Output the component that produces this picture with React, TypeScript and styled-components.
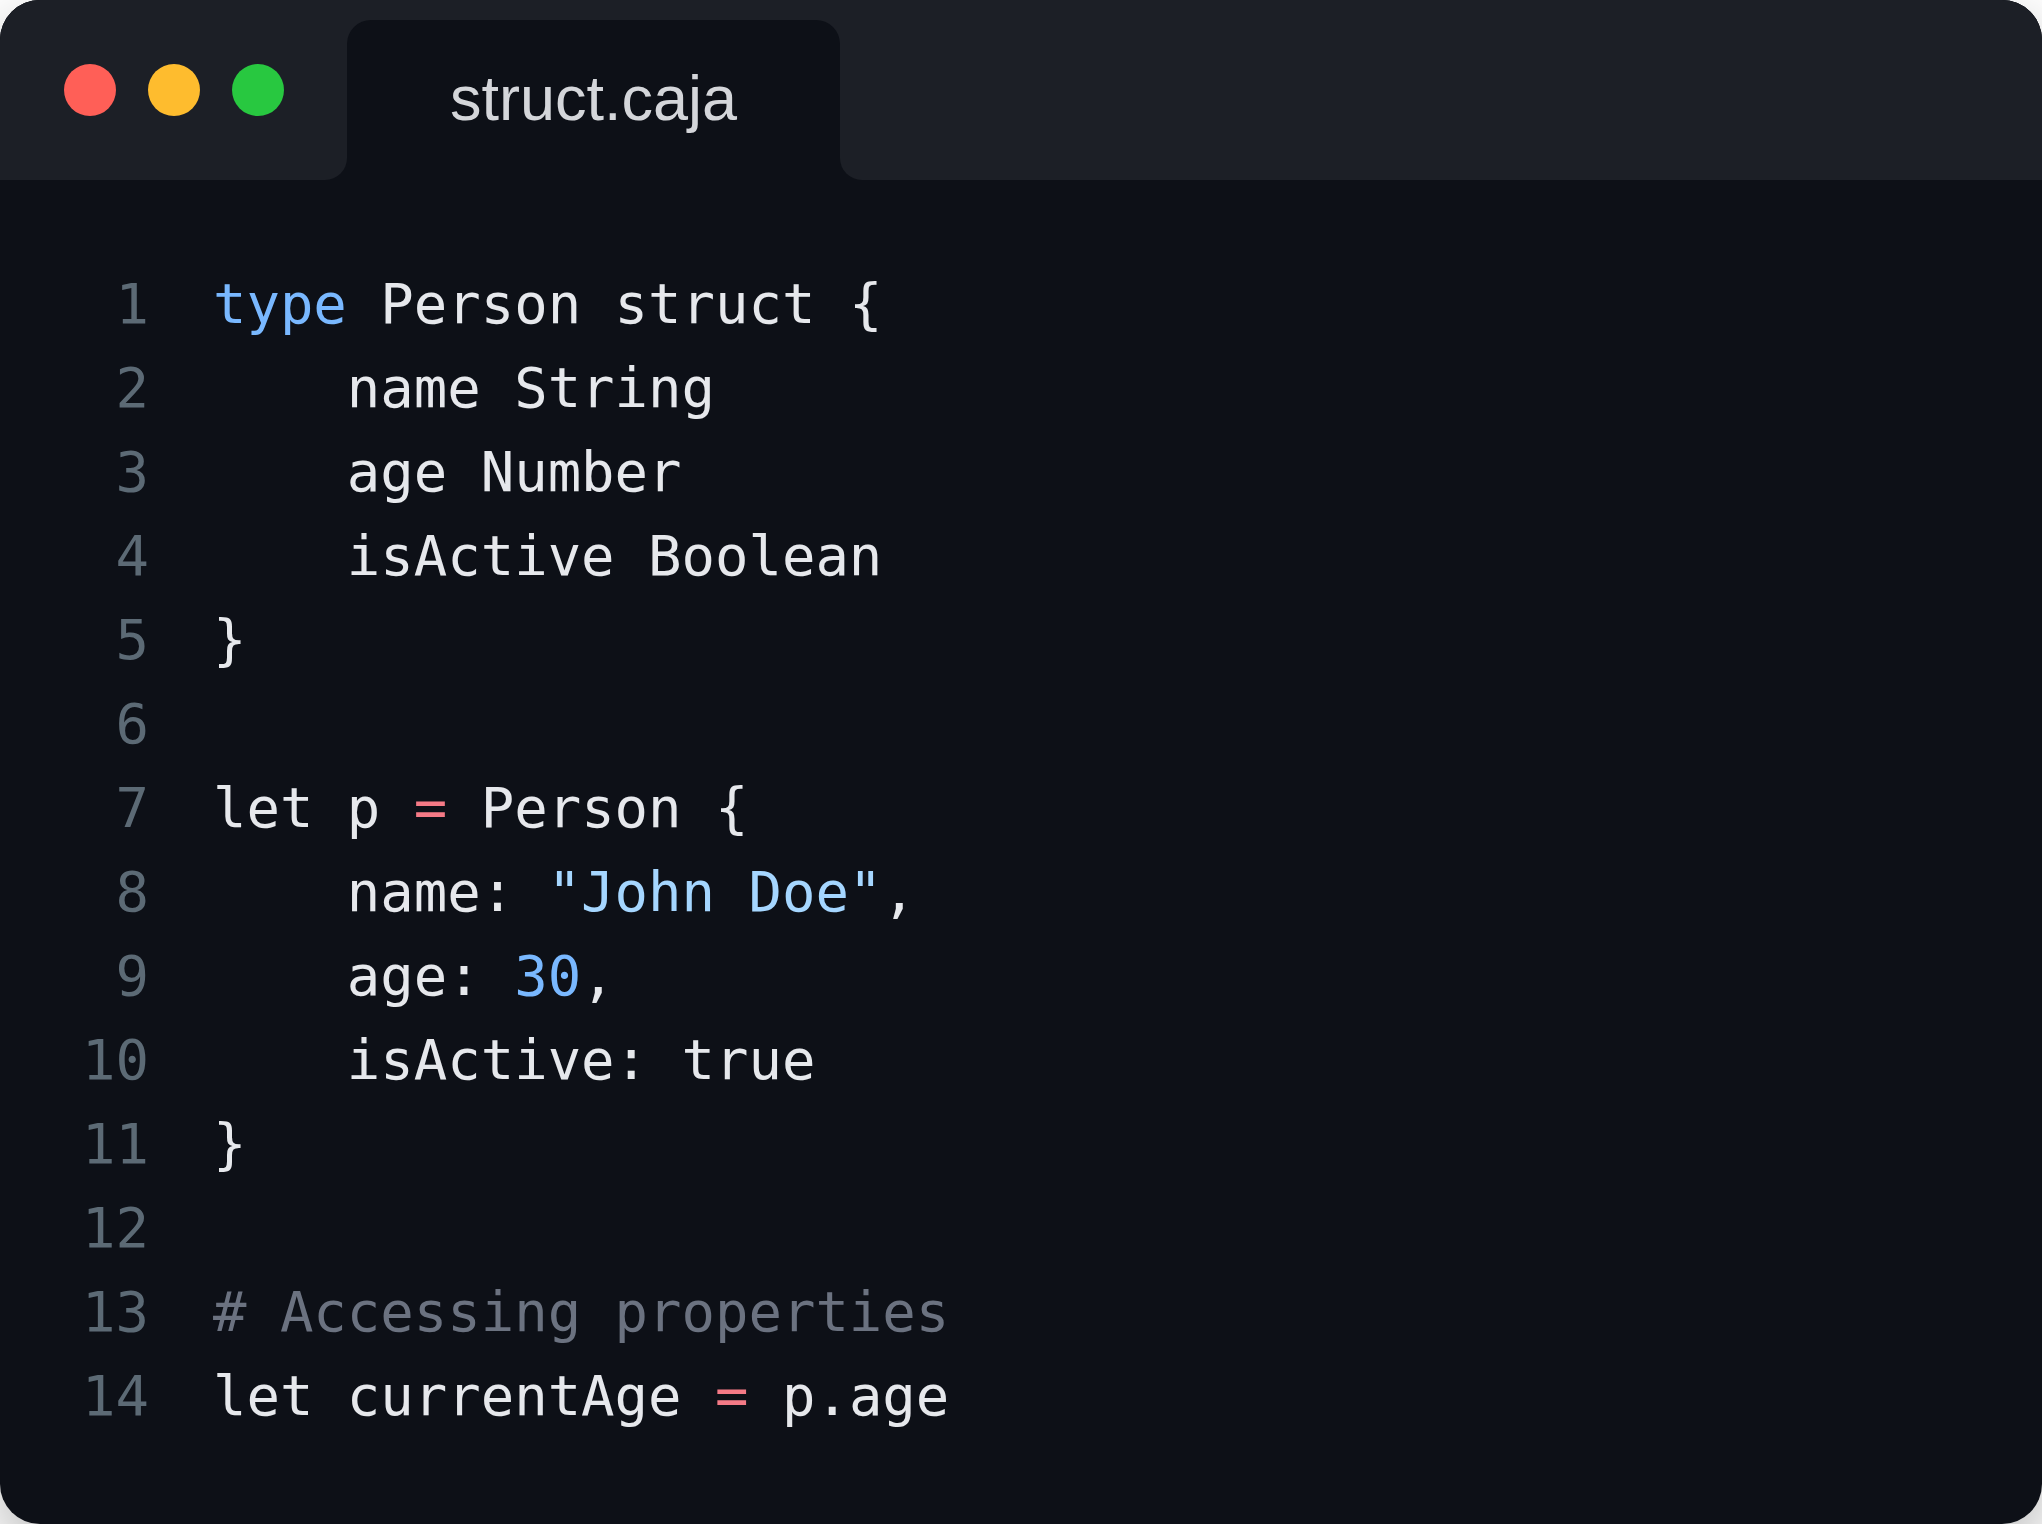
import React from "react";
import styled, { createGlobalStyle } from "styled-components";

const Global = createGlobalStyle`
  html, body { margin: 0; padding: 0; background: #ffffff; }
  #root { width: 100vw; height: 100vh; }
`;

const Window = styled.div`
  width: 100%;
  height: 100vh;
  border-radius: 40px;
  overflow: hidden;
  background: #0d1017;
  box-shadow: 0 24px 60px rgba(0, 0, 0, 0.28);
  display: flex;
  flex-direction: column;
`;

const TitleBar = styled.div`
  height: 180px;
  display: grid;
  grid-template-columns: 347px 493px 1fr;
  background: #0d1017;
  flex: none;
`;

const Side = styled.div<{ $corner: "left" | "right" }>`
  background: #1c1f26;
  display: flex;
  align-items: center;
  gap: 32px;
  padding-left: ${(p) => (p.$corner === "left" ? "64px" : "0")};
  border-bottom-right-radius: ${(p) => (p.$corner === "left" ? "22px" : "0")};
  border-bottom-left-radius: ${(p) => (p.$corner === "right" ? "22px" : "0")};
`;

const Light = styled.span<{ $color: string }>`
  width: 52px;
  height: 52px;
  border-radius: 50%;
  background: ${(p) => p.$color};
  flex: none;
`;

const TabSlot = styled.div`
  background: #1c1f26;
  display: flex;
  padding-top: 20px;
`;

const Tab = styled.div`
  flex: 1;
  background: #0d1017;
  border-radius: 24px 24px 0 0;
  display: flex;
  align-items: center;
  justify-content: center;
  padding-bottom: 4px;
  font-family: "Liberation Sans", Arial, sans-serif;
  font-size: 63px;
  letter-spacing: 0;
  color: #d4d6da;
`;

const Code = styled.div`
  flex: 1;
  padding: 82px 0 0 82px;
  font-family: "DejaVu Sans Mono", "Liberation Mono", monospace;
  font-size: 55.6px;
  line-height: 84px;
  color: #e6e8ec;
`;

const Line = styled.div`
  display: flex;
  gap: 64px;
  white-space: pre;
  height: 84px;
`;

const Num = styled.span`
  width: 2ch;
  text-align: right;
  color: #5c6a75;
  flex: none;
`;

const Tok = styled.span<{ $kind: string }>`
  color: ${(p) =>
    p.$kind === "kw"
      ? "#79b8ff"
      : p.$kind === "str"
      ? "#a5d6ff"
      : p.$kind === "num"
      ? "#79b8ff"
      : p.$kind === "op"
      ? "#f47a86"
      : p.$kind === "cm"
      ? "#6b7280"
      : "#e6e8ec"};
`;

type T = [string, string];

const lines: T[][] = [
  [["kw", "type"], ["t", " Person struct {"]],
  [["t", "    name String"]],
  [["t", "    age Number"]],
  [["t", "    isActive Boolean"]],
  [["t", "}"]],
  [],
  [["t", "let p "], ["op", "="], ["t", " Person {"]],
  [["t", "    name: "], ["str", "\"John Doe\""], ["t", ","]],
  [["t", "    age: "], ["num", "30"], ["t", ","]],
  [["t", "    isActive: true"]],
  [["t", "}"]],
  [],
  [["cm", "# Accessing properties"]],
  [["t", "let currentAge "], ["op", "="], ["t", " p.age"]],
];

export default function App() {
  return (
    <>
      <Global />
      <Window>
        <TitleBar>
          <Side $corner="left">
            <Light $color="#ff5f57" />
            <Light $color="#febc2e" />
            <Light $color="#28c840" />
          </Side>
          <TabSlot>
            <Tab>struct.caja</Tab>
          </TabSlot>
          <Side $corner="right" />
        </TitleBar>
        <Code>
          {lines.map((toks, i) => (
            <Line key={i}>
              <Num>{i + 1}</Num>
              <span>
                {toks.map(([k, s], j) => (
                  <Tok key={j} $kind={k}>
                    {s}
                  </Tok>
                ))}
              </span>
            </Line>
          ))}
        </Code>
      </Window>
    </>
  );
}
